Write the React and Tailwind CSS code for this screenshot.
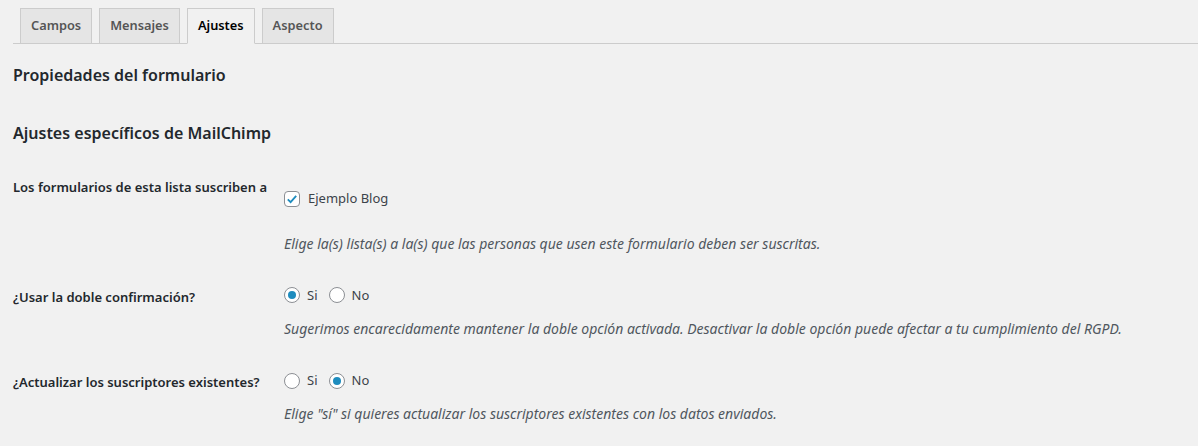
const font = { fontFamily: '"Segoe UI", "Noto Sans", "Open Sans", sans-serif' };

const tabs = ['Campos', 'Mensajes', 'Ajustes', 'Aspecto'];

function Checkbox() {
  return (
    <span className="w-4 h-4 rounded-[4px] border border-[#8c8f94] bg-white flex items-center justify-center shrink-0">
      <svg width="14" height="14" viewBox="0 0 20 20">
        <path d="M4 10.5l4 4 8-9" fill="none" stroke="#1e8cbe" strokeWidth="2.6" />
      </svg>
    </span>
  );
}

function Radio({ on }) {
  return (
    <span className="w-4 h-4 rounded-full border border-[#8c8f94] bg-white flex items-center justify-center shrink-0">
      {on && <span className="w-2 h-2 rounded-full bg-[#1e8cbe]" />}
    </span>
  );
}

function YesNo({ value }) {
  return (
    <div className="flex items-center text-[13px] text-[#3c434a]">
      <Radio on={value === 'si'} />
      <span className="ml-[7px]">Si</span>
      <span className="ml-[11px]"><Radio on={value === 'no'} /></span>
      <span className="ml-[7px]">No</span>
    </div>
  );
}

function Row({ label, children, desc, top, gap }) {
  return (
    <div className="flex">
      <div className="w-[271px] shrink-0 text-[13px] font-semibold text-[#23282d]" style={{ paddingTop: top }}>
        {label}
      </div>
      <div className="flex flex-col">
        {children}
        <p className="italic text-[14px] text-[#50575e]" style={{ marginTop: gap }}>{desc}</p>
      </div>
    </div>
  );
}

export default function App() {
  return (
    <div className="w-[1198px] h-[446px] bg-[#f1f1f1] overflow-hidden" style={font}>
      {/* tabs */}
      <div className="flex items-end pl-[7px] pt-[8px] ml-[13px] border-b border-[#ccc]">
        {tabs.map((t) => (
          <div
            key={t}
            className={`h-[36px] px-[10px] mr-[7px] border border-[#ccc] flex items-center text-[12.8px] font-semibold -mb-px ${
              t === 'Ajustes' ? 'bg-[#f1f1f1] border-b-[#f1f1f1] text-black' : 'bg-[#e5e5e5] text-[#555]'
            }`}
          >
            {t}
          </div>
        ))}
      </div>

      <div className="pl-[13px]">
        <h2 className="text-[16px] font-semibold text-[#23282d] mt-[19px] leading-[24px]">Propiedades del formulario</h2>
        <h2 className="text-[16px] font-semibold text-[#23282d] mt-[34px] leading-[24px]">Ajustes específicos de MailChimp</h2>

        <div className="mt-[33px]">
          <Row
            label="Los formularios de esta lista suscriben a"
            desc="Elige la(s) lista(s) a la(s) que las personas que usen este formulario deben ser suscritas."
            top={0}
            gap={24}
          >
            <div className="flex items-center mt-[11px] text-[13px] text-[#3c434a]">
              <Checkbox />
              <span className="ml-[8px]">Ejemplo Blog</span>
            </div>
          </Row>
        </div>

        <div className="mt-[32px]">
          <Row
            label="¿Usar la doble confirmación?"
            desc="Sugerimos encarecidamente mantener la doble opción activada. Desactivar la doble opción puede afectar a tu cumplimiento del RGPD."
            top={2}
            gap={13}
          >
            <YesNo value="si" />
          </Row>
        </div>

        <div className="mt-[32px]">
          <Row
            label="¿Actualizar los suscriptores existentes?"
            desc={'Elige "sí" si quieres actualizar los suscriptores existentes con los datos enviados.'}
            top={2}
            gap={12}
          >
            <YesNo value="no" />
          </Row>
        </div>
      </div>
    </div>
  );
}
